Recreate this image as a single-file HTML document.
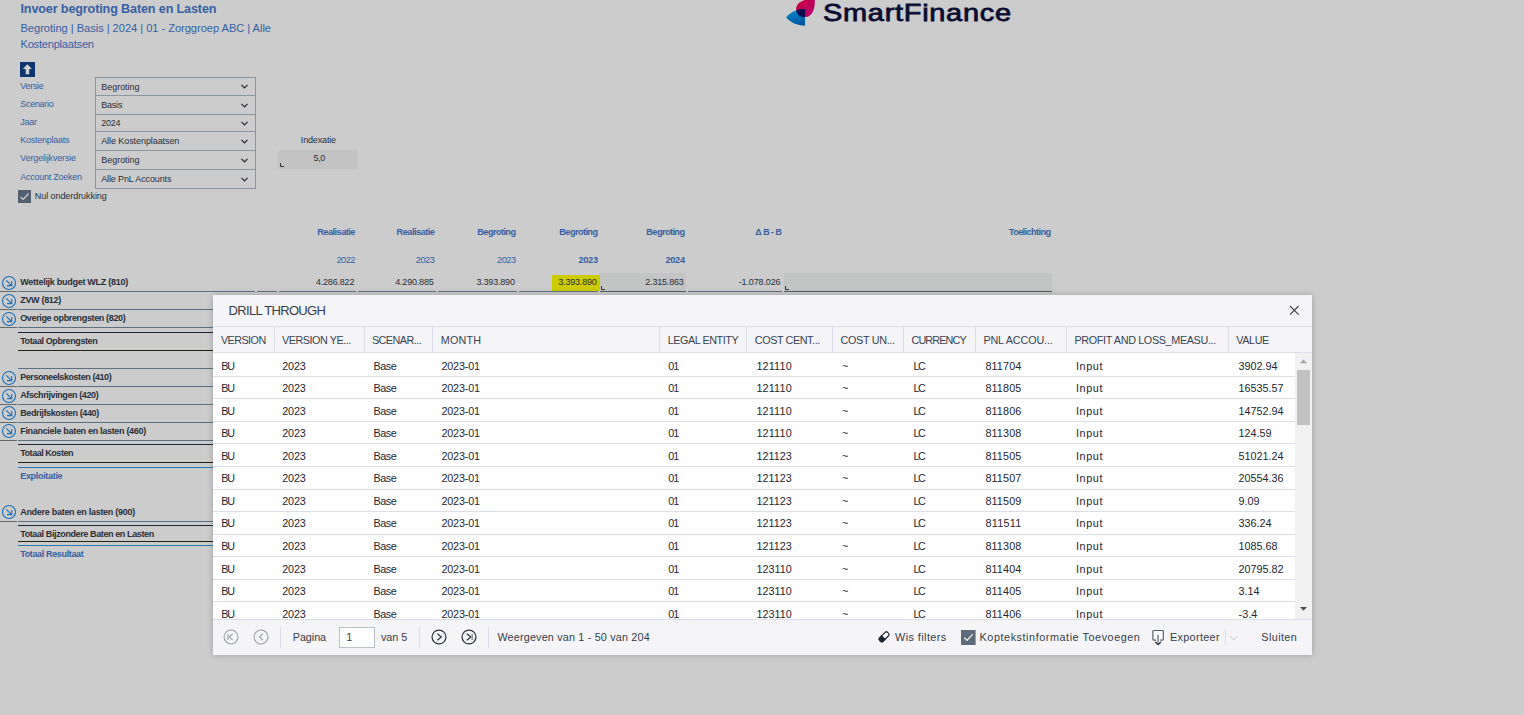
<!DOCTYPE html>
<html><head><meta charset="utf-8"><title>Invoer begroting Baten en Lasten</title>
<style>
html,body{margin:0;padding:0;}
body{width:1524px;height:715px;background:#cccccc;position:relative;overflow:hidden;font-family:"Liberation Sans",sans-serif;}
.layer{position:absolute;left:0;top:0;width:1524px;height:715px;}
.t{position:absolute;white-space:pre;line-height:1;font-family:"Liberation Sans",sans-serif;}
</style></head><body>
<main id="page" class="layer">
<svg style="position:absolute;left:20px;top:62px" width="15" height="15" viewBox="0 0 15 15"><rect width="15" height="15" fill="#0d3570"/><path d="M7.4 2.2 L11.9 6.9 H9.2 V12.3 H5.7 V6.9 H2.9 Z" fill="#d2d2d2"/></svg>
<div style="position:absolute;left:95px;top:77px;width:161px;height:19px;border:1px solid #8a95a2;box-sizing:border-box;"></div>
<svg style="position:absolute;left:240px;top:83.3px" width="9" height="7" viewBox="0 0 9 7"><path d="M1.5 1.9 L4.5 4.9 L7.5 1.9" fill="none" stroke="#262a34" stroke-width="1.3"/></svg>
<div style="position:absolute;left:95px;top:95px;width:161px;height:20px;border:1px solid #8a95a2;box-sizing:border-box;"></div>
<svg style="position:absolute;left:240px;top:101.8px" width="9" height="7" viewBox="0 0 9 7"><path d="M1.5 1.9 L4.5 4.9 L7.5 1.9" fill="none" stroke="#262a34" stroke-width="1.3"/></svg>
<div style="position:absolute;left:95px;top:114px;width:161px;height:18px;border:1px solid #8a95a2;box-sizing:border-box;"></div>
<svg style="position:absolute;left:240px;top:119.8px" width="9" height="7" viewBox="0 0 9 7"><path d="M1.5 1.9 L4.5 4.9 L7.5 1.9" fill="none" stroke="#262a34" stroke-width="1.3"/></svg>
<div style="position:absolute;left:95px;top:131px;width:161px;height:20px;border:1px solid #8a95a2;box-sizing:border-box;"></div>
<svg style="position:absolute;left:240px;top:137.8px" width="9" height="7" viewBox="0 0 9 7"><path d="M1.5 1.9 L4.5 4.9 L7.5 1.9" fill="none" stroke="#262a34" stroke-width="1.3"/></svg>
<div style="position:absolute;left:95px;top:150px;width:161px;height:20px;border:1px solid #8a95a2;box-sizing:border-box;"></div>
<svg style="position:absolute;left:240px;top:156.8px" width="9" height="7" viewBox="0 0 9 7"><path d="M1.5 1.9 L4.5 4.9 L7.5 1.9" fill="none" stroke="#262a34" stroke-width="1.3"/></svg>
<div style="position:absolute;left:95px;top:169px;width:161px;height:20px;border:1px solid #8a95a2;box-sizing:border-box;"></div>
<svg style="position:absolute;left:240px;top:175.8px" width="9" height="7" viewBox="0 0 9 7"><path d="M1.5 1.9 L4.5 4.9 L7.5 1.9" fill="none" stroke="#262a34" stroke-width="1.3"/></svg>
<svg style="position:absolute;left:18px;top:190px" width="13" height="13" viewBox="0 0 13 13"><rect width="13" height="13" fill="#536070"/><path d="M2.6 6.8 L5.2 9.4 L10.6 3.6" fill="none" stroke="#d8d8d8" stroke-width="1.2"/></svg>
<div style="position:absolute;left:278px;top:150px;width:79px;height:19px;background:#c3c3c3;"></div>
<svg style="position:absolute;left:280px;top:163px" width="5" height="5" viewBox="0 0 5 5"><path d="M0.5 0 V3.5 H4" fill="none" stroke="#2a2a2a" stroke-width="0.95"/></svg>
<div style="position:absolute;left:552px;top:275px;width:48px;height:16px;background:#cccc00;"></div>
<div style="position:absolute;left:600px;top:273px;width:86px;height:19px;background:#c2c5c4;"></div>
<div style="position:absolute;left:784px;top:273px;width:268px;height:19px;background:#c2c5c4;"></div>
<svg style="position:absolute;left:601px;top:286px" width="5" height="5" viewBox="0 0 5 5"><path d="M0.5 0 V3.5 H4" fill="none" stroke="#2a2a2a" stroke-width="0.95"/></svg>
<svg style="position:absolute;left:785px;top:286px" width="5" height="5" viewBox="0 0 5 5"><path d="M0.5 0 V3.5 H4" fill="none" stroke="#2a2a2a" stroke-width="0.95"/></svg>
<div style="position:absolute;left:0px;top:291px;width:17px;height:1px;background:#686868;"></div>
<div style="position:absolute;left:18px;top:291px;width:236.5px;height:1px;background:#5b7081;"></div>
<div style="position:absolute;left:256.5px;top:291px;width:20.0px;height:1px;background:#5b7081;"></div>
<div style="position:absolute;left:279px;top:291px;width:77px;height:1px;background:#5b7081;"></div>
<div style="position:absolute;left:358px;top:291px;width:78px;height:1px;background:#5b7081;"></div>
<div style="position:absolute;left:438px;top:291px;width:79px;height:1px;background:#5b7081;"></div>
<div style="position:absolute;left:519px;top:291px;width:79px;height:1px;background:#5b7081;"></div>
<div style="position:absolute;left:600px;top:291px;width:86px;height:1px;background:#555b5f;"></div>
<div style="position:absolute;left:688px;top:291px;width:94px;height:1px;background:#5b7081;"></div>
<div style="position:absolute;left:784px;top:291px;width:268px;height:1px;background:#555b5f;"></div>
<div style="position:absolute;left:0px;top:309px;width:17px;height:1px;background:#686868;"></div>
<div style="position:absolute;left:18px;top:309px;width:236.5px;height:1px;background:#5b7081;"></div>
<div style="position:absolute;left:0px;top:327px;width:17px;height:1px;background:#686868;"></div>
<div style="position:absolute;left:18px;top:327px;width:236.5px;height:1px;background:#5b7081;"></div>
<div style="position:absolute;left:0px;top:386px;width:17px;height:1px;background:#686868;"></div>
<div style="position:absolute;left:18px;top:386px;width:236.5px;height:1px;background:#5b7081;"></div>
<div style="position:absolute;left:0px;top:404px;width:17px;height:1px;background:#686868;"></div>
<div style="position:absolute;left:18px;top:404px;width:236.5px;height:1px;background:#5b7081;"></div>
<div style="position:absolute;left:0px;top:422px;width:17px;height:1px;background:#686868;"></div>
<div style="position:absolute;left:18px;top:422px;width:236.5px;height:1px;background:#5b7081;"></div>
<div style="position:absolute;left:0px;top:440px;width:17px;height:1px;background:#686868;"></div>
<div style="position:absolute;left:18px;top:440px;width:236.5px;height:1px;background:#5b7081;"></div>
<div style="position:absolute;left:0px;top:521px;width:17px;height:1px;background:#686868;"></div>
<div style="position:absolute;left:18px;top:521px;width:236.5px;height:1px;background:#5b7081;"></div>
<div style="position:absolute;left:18px;top:368px;width:236.5px;height:1px;background:#5b7081;"></div>
<div style="position:absolute;left:18px;top:332px;width:236.5px;height:1px;background:#1c2733;"></div>
<div style="position:absolute;left:18px;top:444px;width:236.5px;height:1px;background:#1c2733;"></div>
<div style="position:absolute;left:18px;top:525px;width:236.5px;height:1px;background:#1c2733;"></div>
<div style="position:absolute;left:18px;top:350px;width:236.5px;height:1px;background:#1e2411;"></div>
<div style="position:absolute;left:18px;top:462px;width:236.5px;height:1px;background:#1e2411;"></div>
<div style="position:absolute;left:18px;top:541px;width:236.5px;height:1px;background:#1e2411;"></div>
<div style="position:absolute;left:18px;top:467px;width:236.5px;height:1px;background:#2779b5;"></div>
<div style="position:absolute;left:18px;top:545px;width:236.5px;height:1px;background:#2779b5;"></div>
<svg style="position:absolute;left:1px;top:274.9px" width="16" height="16" viewBox="0 0 16 16"><circle cx="8" cy="8" r="6.5" fill="none" stroke="#1a6eb8" stroke-width="1.1"/><path d="M5.3 5.3 L10.4 10.4 M6 10.6 H10.7 V5.9" fill="none" stroke="#1a6eb8" stroke-width="1.1"/></svg>
<svg style="position:absolute;left:1px;top:292.8px" width="16" height="16" viewBox="0 0 16 16"><circle cx="8" cy="8" r="6.5" fill="none" stroke="#1a6eb8" stroke-width="1.1"/><path d="M5.3 5.3 L10.4 10.4 M6 10.6 H10.7 V5.9" fill="none" stroke="#1a6eb8" stroke-width="1.1"/></svg>
<svg style="position:absolute;left:1px;top:310.9px" width="16" height="16" viewBox="0 0 16 16"><circle cx="8" cy="8" r="6.5" fill="none" stroke="#1a6eb8" stroke-width="1.1"/><path d="M5.3 5.3 L10.4 10.4 M6 10.6 H10.7 V5.9" fill="none" stroke="#1a6eb8" stroke-width="1.1"/></svg>
<svg style="position:absolute;left:1px;top:369.5px" width="16" height="16" viewBox="0 0 16 16"><circle cx="8" cy="8" r="6.5" fill="none" stroke="#1a6eb8" stroke-width="1.1"/><path d="M5.3 5.3 L10.4 10.4 M6 10.6 H10.7 V5.9" fill="none" stroke="#1a6eb8" stroke-width="1.1"/></svg>
<svg style="position:absolute;left:1px;top:387.5px" width="16" height="16" viewBox="0 0 16 16"><circle cx="8" cy="8" r="6.5" fill="none" stroke="#1a6eb8" stroke-width="1.1"/><path d="M5.3 5.3 L10.4 10.4 M6 10.6 H10.7 V5.9" fill="none" stroke="#1a6eb8" stroke-width="1.1"/></svg>
<svg style="position:absolute;left:1px;top:405.4px" width="16" height="16" viewBox="0 0 16 16"><circle cx="8" cy="8" r="6.5" fill="none" stroke="#1a6eb8" stroke-width="1.1"/><path d="M5.3 5.3 L10.4 10.4 M6 10.6 H10.7 V5.9" fill="none" stroke="#1a6eb8" stroke-width="1.1"/></svg>
<svg style="position:absolute;left:1px;top:423.4px" width="16" height="16" viewBox="0 0 16 16"><circle cx="8" cy="8" r="6.5" fill="none" stroke="#1a6eb8" stroke-width="1.1"/><path d="M5.3 5.3 L10.4 10.4 M6 10.6 H10.7 V5.9" fill="none" stroke="#1a6eb8" stroke-width="1.1"/></svg>
<svg style="position:absolute;left:1px;top:504.3px" width="16" height="16" viewBox="0 0 16 16"><circle cx="8" cy="8" r="6.5" fill="none" stroke="#1a6eb8" stroke-width="1.1"/><path d="M5.3 5.3 L10.4 10.4 M6 10.6 H10.7 V5.9" fill="none" stroke="#1a6eb8" stroke-width="1.1"/></svg>
<svg style="position:absolute;left:780px;top:0px" width="40" height="30" viewBox="0 0 40 30">
<defs><linearGradient id="gr" x1="0" y1="0" x2="1" y2="1"><stop offset="0" stop-color="#cf0038"/><stop offset="1" stop-color="#ad0070"/></linearGradient>
<linearGradient id="gb" x1="0" y1="0" x2="0.3" y2="1"><stop offset="0" stop-color="#0090cf"/><stop offset="1" stop-color="#0059a4"/></linearGradient></defs>
<path d="M34.6 -2 C35.5 6 33.5 16.5 26 17 C20 17.3 16 13.5 16.2 8.5 C16.5 2 25 -1 34.6 -2 Z" fill="url(#gr)"/>
<path d="M6.1 17.5 C10 12 17 9.2 25 9 L25 25.8 C17 25.5 10.5 22.5 6.1 17.5 Z" fill="url(#gb)"/>
<path d="M16.2 9.9 C18.8 9.3 21.8 9.05 25 9 L25 17 C19.5 17.2 16.3 14 16.2 9.9 Z" fill="#0b0a4a"/>
</svg>
<span class="t" id="logo" style="left:822.8px;top:1px;font-size:24px;color:#0a0b31;letter-spacing:0.6px;transform-origin:0 0;transform:scaleX(1.205);-webkit-text-stroke:0.8px #0a0b31;">SmartFinance</span>
<span class="t" style="top:3.00px;font-size:12.6px;color:#3560a4;font-weight:700;letter-spacing:-0.134px;left:20.50px;">Invoer begroting Baten en Lasten</span>
<span class="t" style="top:23.00px;font-size:11.1px;color:#3560a4;letter-spacing:-0.030px;left:20.50px;">Begroting | Basis | 2024 | 01 - Zorggroep ABC | Alle</span>
<span class="t" style="top:39.00px;font-size:11.1px;color:#3560a4;letter-spacing:-0.230px;left:20.50px;">Kostenplaatsen</span>
<span class="t" style="top:82.00px;font-size:9.0px;color:#3560a4;left:20.30px;letter-spacing:-0.3px;">Versie</span>
<span class="t" style="top:100.00px;font-size:9.0px;color:#3560a4;left:20.30px;letter-spacing:-0.3px;">Scenario</span>
<span class="t" style="top:118.00px;font-size:9.0px;color:#3560a4;left:20.30px;letter-spacing:-0.3px;">Jaar</span>
<span class="t" style="top:136.00px;font-size:9.0px;color:#3560a4;letter-spacing:-0.250px;left:20.30px;">Kostenplaats</span>
<span class="t" style="top:154.00px;font-size:9.0px;color:#3560a4;letter-spacing:-0.159px;left:20.30px;">Vergelijkversie</span>
<span class="t" style="top:173.00px;font-size:9.0px;color:#3560a4;letter-spacing:-0.265px;left:20.30px;">Account Zoeken</span>
<span class="t" style="top:83.00px;font-size:9.0px;color:#2a2e38;letter-spacing:-0.016px;left:101.20px;">Begroting</span>
<span class="t" style="top:101.00px;font-size:9.0px;color:#2a2e38;left:101.20px;letter-spacing:-0.2px;">Basis</span>
<span class="t" style="top:119.00px;font-size:9.0px;color:#2a2e38;left:101.20px;letter-spacing:-0.2px;">2024</span>
<span class="t" style="top:137.00px;font-size:9.0px;color:#2a2e38;letter-spacing:-0.076px;left:101.20px;">Alle Kostenplaatsen</span>
<span class="t" style="top:156.00px;font-size:9.0px;color:#2a2e38;letter-spacing:-0.016px;left:101.20px;">Begroting</span>
<span class="t" style="top:175.00px;font-size:9.0px;color:#2a2e38;letter-spacing:-0.120px;left:101.20px;">Alle PnL Accounts</span>
<span class="t" style="top:192.00px;font-size:9.0px;color:#2a2e38;letter-spacing:-0.065px;left:34.80px;">Nul onderdrukking</span>
<span class="t" style="top:136.00px;font-size:9.0px;color:#2a2e38;letter-spacing:-0.154px;left:300.80px;">Indexatie</span>
<span class="t" style="top:154.00px;font-size:9.0px;color:#2a2e38;letter-spacing:-0.458px;left:313.60px;">5,0</span>
<span class="t" style="top:228.00px;font-size:9.2px;color:#3560a4;font-weight:700;letter-spacing:-0.523px;right:1169.12px;">Realisatie</span>
<span class="t" style="top:256.00px;font-size:9.2px;color:#3560a4;letter-spacing:-0.484px;right:1169.08px;">2022</span>
<span class="t" style="top:228.00px;font-size:9.2px;color:#3560a4;font-weight:700;letter-spacing:-0.523px;right:1089.72px;">Realisatie</span>
<span class="t" style="top:256.00px;font-size:9.2px;color:#3560a4;letter-spacing:-0.484px;right:1089.68px;">2023</span>
<span class="t" style="top:228.00px;font-size:9.2px;color:#3560a4;font-weight:700;letter-spacing:-0.586px;right:1008.59px;">Begroting</span>
<span class="t" style="top:256.00px;font-size:9.2px;color:#3560a4;letter-spacing:-0.484px;right:1008.48px;">2023</span>
<span class="t" style="top:228.00px;font-size:9.2px;color:#3560a4;font-weight:700;letter-spacing:-0.586px;right:926.59px;">Begroting</span>
<span class="t" style="top:256.00px;font-size:9.2px;color:#3560a4;font-weight:700;letter-spacing:-0.318px;right:926.32px;">2023</span>
<span class="t" style="top:228.00px;font-size:9.2px;color:#3560a4;font-weight:700;letter-spacing:-0.586px;right:839.59px;">Begroting</span>
<span class="t" style="top:256.00px;font-size:9.2px;color:#3560a4;font-weight:700;letter-spacing:-0.318px;right:839.32px;">2024</span>
<span class="t" style="top:228.00px;font-size:8.9px;color:#3560a4;font-weight:700;left:755.30px;">Δ</span>
<span class="t" style="top:228.00px;font-size:8.9px;color:#3560a4;font-weight:700;left:763.30px;">B</span>
<span class="t" style="top:228.00px;font-size:8.9px;color:#3560a4;font-weight:700;left:770.80px;">-</span>
<span class="t" style="top:228.00px;font-size:8.9px;color:#3560a4;font-weight:700;left:775.50px;">B</span>
<span class="t" style="top:228.00px;font-size:9.2px;color:#3560a4;font-weight:700;letter-spacing:-0.613px;right:473.61px;">Toelichting</span>
<span class="t" style="top:278.00px;font-size:9.0px;color:#2a2e38;letter-spacing:-0.193px;right:1169.79px;">4.286.822</span>
<span class="t" style="top:278.00px;font-size:9.0px;color:#2a2e38;letter-spacing:-0.193px;right:1090.49px;">4.290.885</span>
<span class="t" style="top:278.00px;font-size:9.0px;color:#2a2e38;letter-spacing:-0.193px;right:1009.29px;">3.393.890</span>
<span class="t" style="top:278.00px;font-size:9.0px;color:#2a2e38;letter-spacing:-0.193px;right:927.39px;">3.393.890</span>
<span class="t" style="top:278.00px;font-size:9.0px;color:#2a2e38;letter-spacing:-0.193px;right:840.39px;">2.315.863</span>
<span class="t" style="top:278.00px;font-size:9.0px;color:#2a2e38;letter-spacing:-0.139px;right:743.64px;">-1.078.026</span>
<span class="t" style="top:278.00px;font-size:9.0px;color:#2a2e38;font-weight:700;letter-spacing:-0.274px;left:20.20px;">Wettelijk budget WLZ (810)</span>
<span class="t" style="top:296.00px;font-size:9.0px;color:#2a2e38;font-weight:700;letter-spacing:-0.302px;left:20.20px;">ZVW (812)</span>
<span class="t" style="top:314.00px;font-size:9.0px;color:#2a2e38;font-weight:700;letter-spacing:-0.355px;left:20.20px;">Overige opbrengsten (820)</span>
<span class="t" style="top:337.00px;font-size:9.0px;color:#2a2e38;font-weight:700;letter-spacing:-0.403px;left:20.20px;">Totaal Opbrengsten</span>
<span class="t" style="top:373.00px;font-size:9.0px;color:#2a2e38;font-weight:700;letter-spacing:-0.431px;left:20.20px;">Personeelskosten (410)</span>
<span class="t" style="top:391.00px;font-size:9.0px;color:#2a2e38;font-weight:700;letter-spacing:-0.396px;left:20.20px;">Afschrijvingen (420)</span>
<span class="t" style="top:409.00px;font-size:9.0px;color:#2a2e38;font-weight:700;letter-spacing:-0.370px;left:20.20px;">Bedrijfskosten (440)</span>
<span class="t" style="top:427.00px;font-size:9.0px;color:#2a2e38;font-weight:700;letter-spacing:-0.308px;left:20.20px;">Financiele baten en lasten (460)</span>
<span class="t" style="top:449.00px;font-size:9.0px;color:#2a2e38;font-weight:700;letter-spacing:-0.462px;left:20.20px;">Totaal Kosten</span>
<span class="t" style="top:472.00px;font-size:9.0px;color:#3560a4;font-weight:700;letter-spacing:-0.312px;left:20.20px;">Exploitatie</span>
<span class="t" style="top:508.00px;font-size:9.0px;color:#2a2e38;font-weight:700;letter-spacing:-0.280px;left:20.20px;">Andere baten en lasten (900)</span>
<span class="t" style="top:530.00px;font-size:9.0px;color:#2a2e38;font-weight:700;letter-spacing:-0.387px;left:20.20px;">Totaal Bijzondere Baten en Lasten</span>
<span class="t" style="top:550.00px;font-size:9.0px;color:#3560a4;font-weight:700;letter-spacing:-0.351px;left:20.20px;">Totaal Resultaat</span>
</main>
<section id="drill-through" class="layer" role="dialog" aria-label="Drill Through">
<div id="dlg" style="position:absolute;left:213px;top:295px;width:1099px;height:360px;background:#f5f5f7;box-shadow:0 0 6px rgba(0,0,0,0.22);"></div>
<div style="position:absolute;left:213px;top:326px;width:1099px;height:1px;background:#dbe0e8;"></div>
<div style="position:absolute;left:213px;top:353px;width:1082px;height:267px;background:#fff;"></div>
<div style="position:absolute;left:213px;top:352px;width:1099px;height:1px;background:#dbe0e8;"></div>
<div style="position:absolute;left:213px;top:619px;width:1099px;height:1px;background:#dbe0e8;"></div>
<div style="position:absolute;left:274px;top:327px;width:1px;height:25px;background:#dbe0e8;"></div>
<div style="position:absolute;left:364px;top:327px;width:1px;height:25px;background:#dbe0e8;"></div>
<div style="position:absolute;left:432px;top:327px;width:1px;height:25px;background:#dbe0e8;"></div>
<div style="position:absolute;left:659px;top:327px;width:1px;height:25px;background:#dbe0e8;"></div>
<div style="position:absolute;left:746px;top:327px;width:1px;height:25px;background:#dbe0e8;"></div>
<div style="position:absolute;left:832px;top:327px;width:1px;height:25px;background:#dbe0e8;"></div>
<div style="position:absolute;left:903px;top:327px;width:1px;height:25px;background:#dbe0e8;"></div>
<div style="position:absolute;left:975px;top:327px;width:1px;height:25px;background:#dbe0e8;"></div>
<div style="position:absolute;left:1066px;top:327px;width:1px;height:25px;background:#dbe0e8;"></div>
<div style="position:absolute;left:1228px;top:327px;width:1px;height:25px;background:#dbe0e8;"></div>
<div style="position:absolute;left:213px;top:376px;width:1082px;height:1px;background:#dbe0e8;"></div>
<div style="position:absolute;left:213px;top:398px;width:1082px;height:1px;background:#dbe0e8;"></div>
<div style="position:absolute;left:213px;top:421px;width:1082px;height:1px;background:#dbe0e8;"></div>
<div style="position:absolute;left:213px;top:443px;width:1082px;height:1px;background:#dbe0e8;"></div>
<div style="position:absolute;left:213px;top:466px;width:1082px;height:1px;background:#dbe0e8;"></div>
<div style="position:absolute;left:213px;top:489px;width:1082px;height:1px;background:#dbe0e8;"></div>
<div style="position:absolute;left:213px;top:511px;width:1082px;height:1px;background:#dbe0e8;"></div>
<div style="position:absolute;left:213px;top:534px;width:1082px;height:1px;background:#dbe0e8;"></div>
<div style="position:absolute;left:213px;top:556px;width:1082px;height:1px;background:#dbe0e8;"></div>
<div style="position:absolute;left:213px;top:579px;width:1082px;height:1px;background:#dbe0e8;"></div>
<div style="position:absolute;left:213px;top:601px;width:1082px;height:1px;background:#dbe0e8;"></div>
<div style="position:absolute;left:1295px;top:353px;width:17px;height:266px;background:#f1f1f1;"></div>
<div style="position:absolute;left:1297px;top:370px;width:13px;height:55px;background:#c1c1c1;"></div>
<svg style="position:absolute;left:1299px;top:358px" width="9" height="6" viewBox="0 0 9 6"><path d="M1 5.3 L4.5 1.5 L8 5.3 Z" fill="#a3a3a3"/></svg>
<svg style="position:absolute;left:1299px;top:606px" width="9" height="6" viewBox="0 0 9 6"><path d="M1 1 L4.5 4.8 L8 1 Z" fill="#505050"/></svg>
<svg style="position:absolute;left:1289px;top:305px" width="11" height="11" viewBox="0 0 11 11"><path d="M1 1 L9.6 9.6 M9.6 1 L1 9.6" stroke="#3a3f48" stroke-width="1.1" fill="none"/></svg>
<div style="position:absolute;left:339px;top:627px;width:36px;height:21px;background:#fff;border:1px solid #b9c1cd;box-sizing:border-box;"></div>
<div style="position:absolute;left:280px;top:627px;width:1px;height:21px;background:#dbe0e8;"></div>
<div style="position:absolute;left:419px;top:627px;width:1px;height:21px;background:#dbe0e8;"></div>
<div style="position:absolute;left:488px;top:627px;width:1px;height:21px;background:#dbe0e8;"></div>
<div style="position:absolute;left:1225px;top:630px;width:1px;height:15px;background:#dbe0e8;"></div>
<svg style="position:absolute;left:223.4px;top:629.4px" width="16" height="16" viewBox="0 0 16 16"><circle cx="8" cy="8" r="6.95" fill="none" stroke="#989da5" stroke-width="1.1"/><path d="M5.0 4.8 V11.2 M9.7 4.8 L6.3 8 L9.7 11.2" fill="none" stroke="#989da5" stroke-width="1.1"/></svg>
<svg style="position:absolute;left:252.9px;top:629.4px" width="16" height="16" viewBox="0 0 16 16"><circle cx="8" cy="8" r="6.95" fill="none" stroke="#989da5" stroke-width="1.1"/><path d="M9.9 4.8 L6.5 8 L9.9 11.2" fill="none" stroke="#989da5" stroke-width="1.1"/></svg>
<svg style="position:absolute;left:431.4px;top:629.4px" width="16" height="16" viewBox="0 0 16 16"><circle cx="8" cy="8" r="6.95" fill="none" stroke="#2e3440" stroke-width="1.25"/><path d="M6.4 4.8 L10.3 8.05 L6.4 11.3" fill="none" stroke="#2e3440" stroke-width="1.25"/></svg>
<svg style="position:absolute;left:461.1px;top:629.4px" width="16" height="16" viewBox="0 0 16 16"><circle cx="8" cy="8" r="6.95" fill="none" stroke="#2e3440" stroke-width="1.25"/><path d="M5.9 4.8 L9.8 8.05 L5.9 11.3" fill="none" stroke="#2e3440" stroke-width="1.25"/><path d="M11.2 5 V11" fill="none" stroke="#8b9097" stroke-width="1.4"/></svg>
<svg style="position:absolute;left:876px;top:629px" width="16" height="16" viewBox="0 0 16 16"><g transform="translate(8.1 7.8) rotate(-45)"><rect x="-5.6" y="-2.4" width="11.2" height="4.8" rx="1.7" fill="#fff" stroke="#1f2733" stroke-width="1.2"/><path d="M-0.6 -3 H-3.9 Q-6.2 -3 -6.2 -0.8 V0.8 Q-6.2 3 -3.9 3 H-0.6 Z" fill="#1f2733"/></g></svg>
<svg style="position:absolute;left:961px;top:630px" width="15" height="15" viewBox="0 0 15 15"><rect width="14.6" height="15" fill="#5d6b7b"/><path d="M3.2 7.6 L6 10.4 L11.6 4.4" fill="none" stroke="#fff" stroke-width="1.1"/></svg>
<svg style="position:absolute;left:1151px;top:629px" width="15" height="18" viewBox="0 0 15 18"><path d="M5 11.1 H2.7 Q1.9 11.1 1.9 10.3 V2.3 Q1.9 1.5 2.7 1.5 H11.5 Q12.3 1.5 12.3 2.3 V10.3 Q12.3 11.1 11.5 11.1 H9.2" fill="#fdfdfe" stroke="#525c69" stroke-width="1.15"/><path d="M7.1 5.8 V13.5" stroke="#8d949d" stroke-width="1.8"/><path d="M4.3 12.9 L7.1 15.6 L9.9 12.9" fill="none" stroke="#2a313c" stroke-width="1.4"/></svg>
<svg style="position:absolute;left:1229px;top:634px" width="10" height="8" viewBox="0 0 10 8"><path d="M1 1.9 L4.7 5.9 L8.4 1.9" fill="none" stroke="#c3c7cd" stroke-width="1"/></svg>
<span class="t" style="top:304.00px;font-size:13.0px;color:#353c48;letter-spacing:-0.681px;left:228.60px;">DRILL THROUGH</span>
<span class="t" style="top:335.00px;font-size:10.8px;color:#384252;letter-spacing:-0.552px;left:220.90px;">VERSION</span>
<span class="t" style="top:335.00px;font-size:10.8px;color:#384252;letter-spacing:-0.459px;left:282.00px;">VERSION YE...</span>
<span class="t" style="top:335.00px;font-size:10.8px;color:#384252;letter-spacing:-0.525px;left:371.90px;">SCENAR...</span>
<span class="t" style="top:335.00px;font-size:10.8px;color:#384252;letter-spacing:0.152px;left:440.80px;">MONTH</span>
<span class="t" style="top:335.00px;font-size:10.8px;color:#384252;letter-spacing:-0.456px;left:667.80px;">LEGAL ENTITY</span>
<span class="t" style="top:335.00px;font-size:10.8px;color:#384252;letter-spacing:-0.409px;left:754.80px;">COST CENT...</span>
<span class="t" style="top:335.00px;font-size:10.8px;color:#384252;letter-spacing:-0.321px;left:840.50px;">COST UN...</span>
<span class="t" style="top:335.00px;font-size:10.8px;color:#384252;letter-spacing:-0.870px;left:911.50px;">CURRENCY</span>
<span class="t" style="top:335.00px;font-size:10.8px;color:#384252;letter-spacing:-0.145px;left:983.40px;">PNL ACCOU...</span>
<span class="t" style="top:335.00px;font-size:10.8px;color:#384252;letter-spacing:-0.352px;left:1074.50px;">PROFIT AND LOSS_MEASU...</span>
<span class="t" style="top:335.00px;font-size:10.8px;color:#384252;letter-spacing:-0.402px;left:1236.30px;">VALUE</span>
<span class="t" style="top:361.00px;font-size:10.8px;color:#23272f;letter-spacing:-1.200px;left:221.30px;">BU</span>
<span class="t" style="top:361.00px;font-size:10.8px;color:#23272f;letter-spacing:-0.144px;left:282.20px;">2023</span>
<span class="t" style="top:361.00px;font-size:10.8px;color:#23272f;letter-spacing:-0.470px;left:373.50px;">Base</span>
<span class="t" style="top:361.00px;font-size:10.8px;color:#23272f;letter-spacing:-0.171px;left:441.40px;">2023-01</span>
<span class="t" style="top:361.00px;font-size:10.8px;color:#23272f;letter-spacing:-1.016px;left:668.20px;">01</span>
<span class="t" style="top:361.00px;font-size:10.8px;color:#23272f;letter-spacing:0.172px;left:756.40px;">121110</span>
<span class="t" style="top:361.00px;font-size:10.8px;color:#23272f;left:842.00px;">~</span>
<span class="t" style="top:361.00px;font-size:10.8px;color:#23272f;letter-spacing:-1.412px;left:913.50px;">LC</span>
<span class="t" style="top:361.00px;font-size:10.8px;color:#23272f;letter-spacing:0.133px;left:985.40px;">811704</span>
<span class="t" style="top:361.00px;font-size:10.8px;color:#23272f;letter-spacing:0.596px;left:1076.00px;">Input</span>
<span class="t" style="top:361.00px;font-size:10.8px;color:#23272f;left:1238.60px;">3902.94</span>
<span class="t" style="top:383.00px;font-size:10.8px;color:#23272f;letter-spacing:-1.200px;left:221.30px;">BU</span>
<span class="t" style="top:383.00px;font-size:10.8px;color:#23272f;letter-spacing:-0.144px;left:282.20px;">2023</span>
<span class="t" style="top:383.00px;font-size:10.8px;color:#23272f;letter-spacing:-0.470px;left:373.50px;">Base</span>
<span class="t" style="top:383.00px;font-size:10.8px;color:#23272f;letter-spacing:-0.171px;left:441.40px;">2023-01</span>
<span class="t" style="top:383.00px;font-size:10.8px;color:#23272f;letter-spacing:-1.016px;left:668.20px;">01</span>
<span class="t" style="top:383.00px;font-size:10.8px;color:#23272f;letter-spacing:0.172px;left:756.40px;">121110</span>
<span class="t" style="top:383.00px;font-size:10.8px;color:#23272f;left:842.00px;">~</span>
<span class="t" style="top:383.00px;font-size:10.8px;color:#23272f;letter-spacing:-1.412px;left:913.50px;">LC</span>
<span class="t" style="top:383.00px;font-size:10.8px;color:#23272f;letter-spacing:0.133px;left:985.40px;">811805</span>
<span class="t" style="top:383.00px;font-size:10.8px;color:#23272f;letter-spacing:0.596px;left:1076.00px;">Input</span>
<span class="t" style="top:383.00px;font-size:10.8px;color:#23272f;left:1238.60px;">16535.57</span>
<span class="t" style="top:406.00px;font-size:10.8px;color:#23272f;letter-spacing:-1.200px;left:221.30px;">BU</span>
<span class="t" style="top:406.00px;font-size:10.8px;color:#23272f;letter-spacing:-0.144px;left:282.20px;">2023</span>
<span class="t" style="top:406.00px;font-size:10.8px;color:#23272f;letter-spacing:-0.470px;left:373.50px;">Base</span>
<span class="t" style="top:406.00px;font-size:10.8px;color:#23272f;letter-spacing:-0.171px;left:441.40px;">2023-01</span>
<span class="t" style="top:406.00px;font-size:10.8px;color:#23272f;letter-spacing:-1.016px;left:668.20px;">01</span>
<span class="t" style="top:406.00px;font-size:10.8px;color:#23272f;letter-spacing:0.172px;left:756.40px;">121110</span>
<span class="t" style="top:406.00px;font-size:10.8px;color:#23272f;left:842.00px;">~</span>
<span class="t" style="top:406.00px;font-size:10.8px;color:#23272f;letter-spacing:-1.412px;left:913.50px;">LC</span>
<span class="t" style="top:406.00px;font-size:10.8px;color:#23272f;letter-spacing:0.133px;left:985.40px;">811806</span>
<span class="t" style="top:406.00px;font-size:10.8px;color:#23272f;letter-spacing:0.596px;left:1076.00px;">Input</span>
<span class="t" style="top:406.00px;font-size:10.8px;color:#23272f;left:1238.60px;">14752.94</span>
<span class="t" style="top:428.00px;font-size:10.8px;color:#23272f;letter-spacing:-1.200px;left:221.30px;">BU</span>
<span class="t" style="top:428.00px;font-size:10.8px;color:#23272f;letter-spacing:-0.144px;left:282.20px;">2023</span>
<span class="t" style="top:428.00px;font-size:10.8px;color:#23272f;letter-spacing:-0.470px;left:373.50px;">Base</span>
<span class="t" style="top:428.00px;font-size:10.8px;color:#23272f;letter-spacing:-0.171px;left:441.40px;">2023-01</span>
<span class="t" style="top:428.00px;font-size:10.8px;color:#23272f;letter-spacing:-1.016px;left:668.20px;">01</span>
<span class="t" style="top:428.00px;font-size:10.8px;color:#23272f;letter-spacing:0.172px;left:756.40px;">121110</span>
<span class="t" style="top:428.00px;font-size:10.8px;color:#23272f;left:842.00px;">~</span>
<span class="t" style="top:428.00px;font-size:10.8px;color:#23272f;letter-spacing:-1.412px;left:913.50px;">LC</span>
<span class="t" style="top:428.00px;font-size:10.8px;color:#23272f;letter-spacing:0.133px;left:985.40px;">811308</span>
<span class="t" style="top:428.00px;font-size:10.8px;color:#23272f;letter-spacing:0.596px;left:1076.00px;">Input</span>
<span class="t" style="top:428.00px;font-size:10.8px;color:#23272f;left:1238.60px;">124.59</span>
<span class="t" style="top:451.00px;font-size:10.8px;color:#23272f;letter-spacing:-1.200px;left:221.30px;">BU</span>
<span class="t" style="top:451.00px;font-size:10.8px;color:#23272f;letter-spacing:-0.144px;left:282.20px;">2023</span>
<span class="t" style="top:451.00px;font-size:10.8px;color:#23272f;letter-spacing:-0.470px;left:373.50px;">Base</span>
<span class="t" style="top:451.00px;font-size:10.8px;color:#23272f;letter-spacing:-0.171px;left:441.40px;">2023-01</span>
<span class="t" style="top:451.00px;font-size:10.8px;color:#23272f;letter-spacing:-1.016px;left:668.20px;">01</span>
<span class="t" style="top:451.00px;font-size:10.8px;color:#23272f;letter-spacing:0.013px;left:756.40px;">121123</span>
<span class="t" style="top:451.00px;font-size:10.8px;color:#23272f;left:842.00px;">~</span>
<span class="t" style="top:451.00px;font-size:10.8px;color:#23272f;letter-spacing:-1.412px;left:913.50px;">LC</span>
<span class="t" style="top:451.00px;font-size:10.8px;color:#23272f;letter-spacing:0.133px;left:985.40px;">811505</span>
<span class="t" style="top:451.00px;font-size:10.8px;color:#23272f;letter-spacing:0.596px;left:1076.00px;">Input</span>
<span class="t" style="top:451.00px;font-size:10.8px;color:#23272f;left:1238.60px;">51021.24</span>
<span class="t" style="top:473.00px;font-size:10.8px;color:#23272f;letter-spacing:-1.200px;left:221.30px;">BU</span>
<span class="t" style="top:473.00px;font-size:10.8px;color:#23272f;letter-spacing:-0.144px;left:282.20px;">2023</span>
<span class="t" style="top:473.00px;font-size:10.8px;color:#23272f;letter-spacing:-0.470px;left:373.50px;">Base</span>
<span class="t" style="top:473.00px;font-size:10.8px;color:#23272f;letter-spacing:-0.171px;left:441.40px;">2023-01</span>
<span class="t" style="top:473.00px;font-size:10.8px;color:#23272f;letter-spacing:-1.016px;left:668.20px;">01</span>
<span class="t" style="top:473.00px;font-size:10.8px;color:#23272f;letter-spacing:0.013px;left:756.40px;">121123</span>
<span class="t" style="top:473.00px;font-size:10.8px;color:#23272f;left:842.00px;">~</span>
<span class="t" style="top:473.00px;font-size:10.8px;color:#23272f;letter-spacing:-1.412px;left:913.50px;">LC</span>
<span class="t" style="top:473.00px;font-size:10.8px;color:#23272f;letter-spacing:0.133px;left:985.40px;">811507</span>
<span class="t" style="top:473.00px;font-size:10.8px;color:#23272f;letter-spacing:0.596px;left:1076.00px;">Input</span>
<span class="t" style="top:473.00px;font-size:10.8px;color:#23272f;left:1238.60px;">20554.36</span>
<span class="t" style="top:496.00px;font-size:10.8px;color:#23272f;letter-spacing:-1.200px;left:221.30px;">BU</span>
<span class="t" style="top:496.00px;font-size:10.8px;color:#23272f;letter-spacing:-0.144px;left:282.20px;">2023</span>
<span class="t" style="top:496.00px;font-size:10.8px;color:#23272f;letter-spacing:-0.470px;left:373.50px;">Base</span>
<span class="t" style="top:496.00px;font-size:10.8px;color:#23272f;letter-spacing:-0.171px;left:441.40px;">2023-01</span>
<span class="t" style="top:496.00px;font-size:10.8px;color:#23272f;letter-spacing:-1.016px;left:668.20px;">01</span>
<span class="t" style="top:496.00px;font-size:10.8px;color:#23272f;letter-spacing:0.013px;left:756.40px;">121123</span>
<span class="t" style="top:496.00px;font-size:10.8px;color:#23272f;left:842.00px;">~</span>
<span class="t" style="top:496.00px;font-size:10.8px;color:#23272f;letter-spacing:-1.412px;left:913.50px;">LC</span>
<span class="t" style="top:496.00px;font-size:10.8px;color:#23272f;letter-spacing:0.133px;left:985.40px;">811509</span>
<span class="t" style="top:496.00px;font-size:10.8px;color:#23272f;letter-spacing:0.596px;left:1076.00px;">Input</span>
<span class="t" style="top:496.00px;font-size:10.8px;color:#23272f;left:1238.60px;">9.09</span>
<span class="t" style="top:518.00px;font-size:10.8px;color:#23272f;letter-spacing:-1.200px;left:221.30px;">BU</span>
<span class="t" style="top:518.00px;font-size:10.8px;color:#23272f;letter-spacing:-0.144px;left:282.20px;">2023</span>
<span class="t" style="top:518.00px;font-size:10.8px;color:#23272f;letter-spacing:-0.470px;left:373.50px;">Base</span>
<span class="t" style="top:518.00px;font-size:10.8px;color:#23272f;letter-spacing:-0.171px;left:441.40px;">2023-01</span>
<span class="t" style="top:518.00px;font-size:10.8px;color:#23272f;letter-spacing:-1.016px;left:668.20px;">01</span>
<span class="t" style="top:518.00px;font-size:10.8px;color:#23272f;letter-spacing:0.013px;left:756.40px;">121123</span>
<span class="t" style="top:518.00px;font-size:10.8px;color:#23272f;left:842.00px;">~</span>
<span class="t" style="top:518.00px;font-size:10.8px;color:#23272f;letter-spacing:-1.412px;left:913.50px;">LC</span>
<span class="t" style="top:518.00px;font-size:10.8px;color:#23272f;letter-spacing:0.292px;left:985.40px;">811511</span>
<span class="t" style="top:518.00px;font-size:10.8px;color:#23272f;letter-spacing:0.596px;left:1076.00px;">Input</span>
<span class="t" style="top:518.00px;font-size:10.8px;color:#23272f;left:1238.60px;">336.24</span>
<span class="t" style="top:541.00px;font-size:10.8px;color:#23272f;letter-spacing:-1.200px;left:221.30px;">BU</span>
<span class="t" style="top:541.00px;font-size:10.8px;color:#23272f;letter-spacing:-0.144px;left:282.20px;">2023</span>
<span class="t" style="top:541.00px;font-size:10.8px;color:#23272f;letter-spacing:-0.470px;left:373.50px;">Base</span>
<span class="t" style="top:541.00px;font-size:10.8px;color:#23272f;letter-spacing:-0.171px;left:441.40px;">2023-01</span>
<span class="t" style="top:541.00px;font-size:10.8px;color:#23272f;letter-spacing:-1.016px;left:668.20px;">01</span>
<span class="t" style="top:541.00px;font-size:10.8px;color:#23272f;letter-spacing:0.013px;left:756.40px;">121123</span>
<span class="t" style="top:541.00px;font-size:10.8px;color:#23272f;left:842.00px;">~</span>
<span class="t" style="top:541.00px;font-size:10.8px;color:#23272f;letter-spacing:-1.412px;left:913.50px;">LC</span>
<span class="t" style="top:541.00px;font-size:10.8px;color:#23272f;letter-spacing:0.133px;left:985.40px;">811308</span>
<span class="t" style="top:541.00px;font-size:10.8px;color:#23272f;letter-spacing:0.596px;left:1076.00px;">Input</span>
<span class="t" style="top:541.00px;font-size:10.8px;color:#23272f;left:1238.60px;">1085.68</span>
<span class="t" style="top:564.00px;font-size:10.8px;color:#23272f;letter-spacing:-1.200px;left:221.30px;">BU</span>
<span class="t" style="top:564.00px;font-size:10.8px;color:#23272f;letter-spacing:-0.144px;left:282.20px;">2023</span>
<span class="t" style="top:564.00px;font-size:10.8px;color:#23272f;letter-spacing:-0.470px;left:373.50px;">Base</span>
<span class="t" style="top:564.00px;font-size:10.8px;color:#23272f;letter-spacing:-0.171px;left:441.40px;">2023-01</span>
<span class="t" style="top:564.00px;font-size:10.8px;color:#23272f;letter-spacing:-1.016px;left:668.20px;">01</span>
<span class="t" style="top:564.00px;font-size:10.8px;color:#23272f;letter-spacing:0.013px;left:756.40px;">123110</span>
<span class="t" style="top:564.00px;font-size:10.8px;color:#23272f;left:842.00px;">~</span>
<span class="t" style="top:564.00px;font-size:10.8px;color:#23272f;letter-spacing:-1.412px;left:913.50px;">LC</span>
<span class="t" style="top:564.00px;font-size:10.8px;color:#23272f;letter-spacing:0.133px;left:985.40px;">811404</span>
<span class="t" style="top:564.00px;font-size:10.8px;color:#23272f;letter-spacing:0.596px;left:1076.00px;">Input</span>
<span class="t" style="top:564.00px;font-size:10.8px;color:#23272f;left:1238.60px;">20795.82</span>
<span class="t" style="top:586.00px;font-size:10.8px;color:#23272f;letter-spacing:-1.200px;left:221.30px;">BU</span>
<span class="t" style="top:586.00px;font-size:10.8px;color:#23272f;letter-spacing:-0.144px;left:282.20px;">2023</span>
<span class="t" style="top:586.00px;font-size:10.8px;color:#23272f;letter-spacing:-0.470px;left:373.50px;">Base</span>
<span class="t" style="top:586.00px;font-size:10.8px;color:#23272f;letter-spacing:-0.171px;left:441.40px;">2023-01</span>
<span class="t" style="top:586.00px;font-size:10.8px;color:#23272f;letter-spacing:-1.016px;left:668.20px;">01</span>
<span class="t" style="top:586.00px;font-size:10.8px;color:#23272f;letter-spacing:0.013px;left:756.40px;">123110</span>
<span class="t" style="top:586.00px;font-size:10.8px;color:#23272f;left:842.00px;">~</span>
<span class="t" style="top:586.00px;font-size:10.8px;color:#23272f;letter-spacing:-1.412px;left:913.50px;">LC</span>
<span class="t" style="top:586.00px;font-size:10.8px;color:#23272f;letter-spacing:0.133px;left:985.40px;">811405</span>
<span class="t" style="top:586.00px;font-size:10.8px;color:#23272f;letter-spacing:0.596px;left:1076.00px;">Input</span>
<span class="t" style="top:586.00px;font-size:10.8px;color:#23272f;left:1238.60px;">3.14</span>
<span class="t" style="top:609.00px;font-size:10.8px;color:#23272f;letter-spacing:-1.200px;left:221.30px;">BU</span>
<span class="t" style="top:609.00px;font-size:10.8px;color:#23272f;letter-spacing:-0.144px;left:282.20px;">2023</span>
<span class="t" style="top:609.00px;font-size:10.8px;color:#23272f;letter-spacing:-0.470px;left:373.50px;">Base</span>
<span class="t" style="top:609.00px;font-size:10.8px;color:#23272f;letter-spacing:-0.171px;left:441.40px;">2023-01</span>
<span class="t" style="top:609.00px;font-size:10.8px;color:#23272f;letter-spacing:-1.016px;left:668.20px;">01</span>
<span class="t" style="top:609.00px;font-size:10.8px;color:#23272f;letter-spacing:0.013px;left:756.40px;">123110</span>
<span class="t" style="top:609.00px;font-size:10.8px;color:#23272f;left:842.00px;">~</span>
<span class="t" style="top:609.00px;font-size:10.8px;color:#23272f;letter-spacing:-1.412px;left:913.50px;">LC</span>
<span class="t" style="top:609.00px;font-size:10.8px;color:#23272f;letter-spacing:0.133px;left:985.40px;">811406</span>
<span class="t" style="top:609.00px;font-size:10.8px;color:#23272f;letter-spacing:0.596px;left:1076.00px;">Input</span>
<span class="t" style="top:609.00px;font-size:10.8px;color:#23272f;left:1238.60px;">-3.4</span>
<span class="t" style="top:632.00px;font-size:10.8px;color:#353c48;letter-spacing:-0.065px;left:292.80px;">Pagina</span>
<span class="t" style="top:632.00px;font-size:10.8px;color:#353c48;letter-spacing:-0.055px;left:381.00px;">van 5</span>
<span class="t" style="top:632.00px;font-size:10.8px;color:#353c48;letter-spacing:0.179px;left:497.40px;">Weergeven van 1 - 50 van 204</span>
<span class="t" style="top:632.00px;font-size:10.8px;color:#353c48;letter-spacing:0.430px;left:895.10px;">Wis filters</span>
<span class="t" style="top:632.00px;font-size:10.8px;color:#353c48;letter-spacing:0.564px;left:979.60px;">Koptekstinformatie Toevoegen</span>
<span class="t" style="top:632.00px;font-size:10.8px;color:#353c48;letter-spacing:0.336px;left:1170.00px;">Exporteer</span>
<span class="t" style="top:632.00px;font-size:10.8px;color:#353c48;letter-spacing:0.414px;left:1261.30px;">Sluiten</span>
<span class="t" style="top:632.00px;font-size:10.8px;color:#353c48;left:346.20px;">1</span>
</section>
</body></html>
